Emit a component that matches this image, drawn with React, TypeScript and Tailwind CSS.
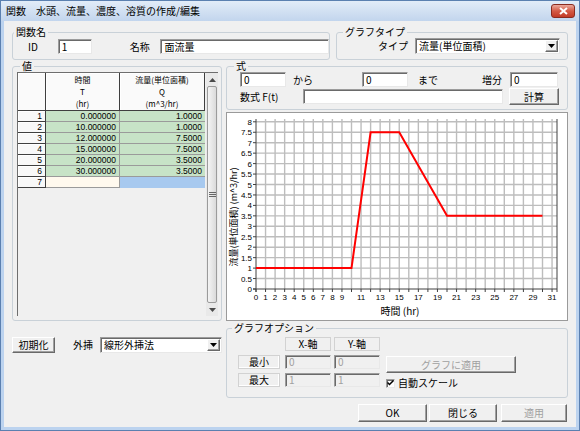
import React from 'react';

const sunken =
  'border border-t-[#9c9c9c] border-l-[#9c9c9c] border-r-[#e8e8e8] border-b-[#e8e8e8] shadow-[inset_1px_1px_0_#6a6a6a]';
const raised =
  'border border-t-white border-l-white border-r-[#696969] border-b-[#696969] shadow-[inset_-1px_-1px_0_#a0a0a0]';

function Btn({ children, className = '', disabled = false }: { children: React.ReactNode; className?: string; disabled?: boolean }) {
  return (
    <div className={`flex items-center justify-center bg-[#f0f0f0] ${raised} ${disabled ? 'text-[#a0a0a0]' : 'text-black'} ${className}`}>
      {children}
    </div>
  );
}

function Field({ value = '', className = '', disabled = false }: { value?: string; className?: string; disabled?: boolean }) {
  return (
    <div className={`flex items-center pl-[3px] ${sunken} ${disabled ? 'bg-[#f0f0f0] text-[#a0a0a0]' : 'bg-white'} ${className}`}>
      {value}
    </div>
  );
}

function Combo({ value, className = '' }: { value: string; className?: string }) {
  return (
    <div className={`flex items-stretch bg-white ${sunken} ${className}`}>
      <span className="flex-1 flex items-center pl-[3px]">{value}</span>
      <div className={`w-[13px] m-[1px] flex items-center justify-center bg-[#f0f0f0] ${raised}`}>
        <svg width="7" height="4" viewBox="0 0 7 4">
          <path d="M0 0h7L3.5 4z" fill="#000" />
        </svg>
      </div>
    </div>
  );
}

function Group({ title, legendOffset, className = '', children }: { title: string; legendOffset: string; className?: string; children: React.ReactNode }) {
  return (
    <fieldset className={`border border-[#c9d1d8] rounded-[3px] min-w-0 ${className}`}>
      <legend className={`${legendOffset} px-[2px] leading-[12px]`}>{title}</legend>
      {children}
    </fieldset>
  );
}

const rows = [
  ['0.000000', '1.0000'],
  ['10.000000', '1.0000'],
  ['12.000000', '7.5000'],
  ['15.000000', '7.5000'],
  ['20.000000', '3.5000'],
  ['30.000000', '3.5000'],
];

const num = "font-['Liberation_Sans',sans-serif] text-[8.5px]";

function HeadCell({ w, lines }: { w: string; lines: string[] }) {
  return (
    <div className={`${w} h-full flex flex-col items-center justify-center bg-[#fafafa] border-r border-b border-[#3f3f3f] shadow-[inset_1px_1px_0_#fff] text-[8px] leading-[12px]`}>
      {lines.map((l) => (
        <span key={l}>{l}</span>
      ))}
    </div>
  );
}

function DataGrid() {
  return (
    <div className="ml-[4px] w-[201px] h-[244px] flex border-l border-t border-[#6e6e6e] bg-[#f0f0f0]">
      <div className="w-[187px] flex flex-col">
        <div className="flex h-[38px]">
          <HeadCell w="w-[28px]" lines={[]} />
          <HeadCell w="w-[74px]" lines={['時間', 'T', '(hr)']} />
          <HeadCell w="w-[85px]" lines={['流量(単位面積)', 'Q', '(m^3/hr)']} />
        </div>
        {[...rows, ['', '']].map((r, i) => (
          <div key={i} className="flex h-[11px]">
            <div className={`w-[28px] flex items-center justify-end pr-[3px] bg-[#f8f8f8] border-r border-b border-[#3f3f3f] shadow-[inset_1px_1px_0_#fff] ${num}`}>
              {i + 1}
            </div>
            <div className={`w-[74px] flex items-center justify-end pr-[3px] border-r border-b border-[#9a9a9a] ${i === 6 ? 'bg-[#fff9ee]' : 'bg-[#c7e3c7]'} ${num}`}>
              {r[0]}
            </div>
            <div className={`w-[85px] flex items-center justify-end pr-[3px] border-b ${i === 6 ? 'bg-[#a7c9ef] border-[#a7c9ef]' : 'bg-[#c7e3c7] border-[#9a9a9a]'} ${num}`}>
              {r[1]}
            </div>
          </div>
        ))}
      </div>
      <div className="w-[13px] ml-[1px] flex flex-col bg-[#e9e9e9]">
        <div className="h-[13px] flex items-center justify-center">
          <svg width="7" height="4" viewBox="0 0 7 4">
            <path d="M0 4h7L3.5 0z" fill="#4a4a4a" />
          </svg>
        </div>
        <div className="flex-1 mx-[1px] flex items-center justify-center rounded-[2px] border border-[#9b9b9b] bg-[linear-gradient(90deg,#f4f4f4,#dadada)]">
          <svg width="7" height="6" viewBox="0 0 7 6">
            <path d="M0 0.5h7M0 2.5h7M0 4.5h7" stroke="#666" strokeWidth="1" />
          </svg>
        </div>
        <div className="h-[13px] flex items-center justify-center">
          <svg width="7" height="4" viewBox="0 0 7 4">
            <path d="M0 0h7L3.5 4z" fill="#4a4a4a" />
          </svg>
        </div>
      </div>
    </div>
  );
}

const X = (t: number) => 29 + t * 9.55;
const Y = (v: number) => 176 - v * 20.9;

function Chart() {
  const vs = Array.from({ length: 17 }, (_, i) => i * 0.5);
  const ts = Array.from({ length: 32 }, (_, i) => i);
  const xLabels = [0, 1, 2, 3, 4, 5, 6, 7, 8, 9, 11, 13, 15, 17, 19, 21, 23, 25, 27, 29, 31];
  const data: [number, number][] = [
    [0, 1],
    [10, 1],
    [12, 7.5],
    [15, 7.5],
    [20, 3.5],
    [30, 3.5],
  ];
  return (
    <div className="mt-[2px] h-[209px] w-[342px] bg-white border border-[#9a9a9a]">
      <svg width="340" height="207" viewBox="0 0 340 207" className="block">
        {ts.slice(1).map((t) => (
          <line key={`v${t}`} x1={X(t)} x2={X(t)} y1={6} y2={176} stroke="#bdbdbd" strokeWidth="1.4" />
        ))}
        {vs.slice(1).map((v) => (
          <line key={`h${v}`} x1={X(0)} x2={330} y1={Y(v)} y2={Y(v)} stroke="#bdbdbd" strokeWidth="1.4" />
        ))}
        <line x1={X(0)} x2={X(0)} y1={6} y2={179} stroke="#404040" strokeWidth="1" />
        <line x1={330} x2={330} y1={6} y2={179} stroke="#404040" strokeWidth="1" />
        <line x1={X(0) - 3} x2={330} y1={Y(0)} y2={Y(0)} stroke="#404040" strokeWidth="1" />
        {ts.map((t) => (
          <line key={`xt${t}`} x1={X(t)} x2={X(t)} y1={Y(0)} y2={Y(0) + 3} stroke="#404040" strokeWidth="1" />
        ))}
        {vs.map((v) => (
          <line key={`yt${v}`} x1={X(0) - 3} x2={X(0)} y1={Y(v)} y2={Y(v)} stroke="#404040" strokeWidth="1" />
        ))}
        <g fontFamily="'Liberation Sans', sans-serif" fontSize="8" fill="#000">
          {vs.map((v) => (
            <text key={`yl${v}`} x={25} y={Y(v) + 3} textAnchor="end">
              {Number.isInteger(v) ? String(v) : v.toFixed(1)}
            </text>
          ))}
          {xLabels.map((t) => (
            <text key={`xl${t}`} x={X(t)} y={187} textAnchor="middle">
              {t}
            </text>
          ))}
        </g>
        <polyline
          points={data.map(([t, v]) => `${X(t)},${Y(v)}`).join(' ')}
          fill="none"
          stroke="#ff0000"
          strokeWidth="2"
        />
        <g fontFamily="'Noto Sans CJK JP', sans-serif" fill="#000">
          <text x={173} y={202} fontSize="10" textAnchor="middle">
            時間 (hr)
          </text>
          <text x={0} y={0} fontSize="9" textAnchor="middle" transform="translate(10 104) rotate(-90)">
            流量(単位面積) (m^3/hr)
          </text>
        </g>
      </svg>
    </div>
  );
}

export default function App() {
  return (
    <div className="w-[580px] h-[431px] flex flex-col overflow-hidden bg-[#bcd3ef] border border-[#5b80b0] font-['Noto_Sans_CJK_JP','Noto_Sans',sans-serif] text-[10px] leading-none text-black">
      {/* title bar */}
      <div className="h-[20px] flex items-center pl-[5px] pr-[4px] bg-[linear-gradient(#e2ecf8,#c2d5ed)]">
        <span className="flex-1 text-[10px]">関数　水頭、流量、濃度、溶質の作成/編集</span>
        <div className="w-[24px] h-[14px] flex items-center justify-center rounded-[3px] border border-[#8a2b1f] bg-[linear-gradient(#eba99c,#d45a45_50%,#c23a26)]">
          <svg width="9" height="8" viewBox="0 0 9 8">
            <path d="M1 1l7 6M8 1L1 7" stroke="#fff" strokeWidth="2" />
          </svg>
        </div>
      </div>

      <div className="flex-1 mx-[3px] mb-[3px] px-[8px] flex flex-col bg-[#f0f0f0]">
        {/* row A */}
        <div className="mt-[5px] flex gap-[6px]">
          <Group title="関数名" legendOffset="ml-[1px]" className="w-[318px] h-[34px]">
            <div className="mt-[1px] h-[15px] flex items-center">
              <span className="ml-[15px] w-[31px]">ID</span>
              <Field value="1" className="w-[35px] h-[15px]" />
              <span className="ml-[38px] w-[32px]">名称</span>
              <Field value="面流量" className="w-[175px] h-[15px]" />
            </div>
          </Group>
          <Group title="グラフタイプ" legendOffset="ml-[6px]" className="w-[232px] h-[34px]">
            <div className="h-[16px] flex items-center">
              <span className="ml-[41px] w-[37px]">タイプ</span>
              <Combo value="流量(単位面積)" className="w-[145px] h-[16px]" />
            </div>
          </Group>
        </div>

        {/* row B */}
        <div className="flex gap-[4px]">
          <Group title="値" legendOffset="ml-[7px]" className="w-[210px] h-[261px]">
            <DataGrid />
          </Group>
          <div className="w-[342px] flex flex-col">
            <Group title="式" legendOffset="ml-[7px]" className="h-[50px]">
              <div className="h-[15px] flex items-center">
                <Field value="0" className="ml-[13px] w-[46px] h-[15px]" />
                <span className="w-[76px] pl-[7px]">から</span>
                <Field value="0" className="w-[46px] h-[15px]" />
                <span className="w-[74px] pl-[10px]">まで</span>
                <span className="w-[28px]">増分</span>
                <Field value="0" className="w-[48px] h-[15px]" />
              </div>
              <div className="mt-[1px] h-[17px] flex items-center">
                <span className="ml-[13px] w-[63px]">数式 F(t)</span>
                <Field className="w-[200px] h-[15px]" />
                <Btn className="ml-[6px] w-[50px] h-[17px]">計算</Btn>
              </div>
            </Group>
            <Chart />
          </div>
        </div>

        {/* row C */}
        <div className="mt-[1px] flex gap-[4px]">
          <div className="w-[210px] flex items-start">
            <div className="mt-[15px] flex items-center">
              <Btn className="w-[43px] h-[16px]">初期化</Btn>
              <span className="ml-[18px] w-[27px]">外挿</span>
              <Combo value="線形外挿法" className="w-[122px] h-[16px]" />
            </div>
          </div>
          <Group title="グラフオプション" legendOffset="ml-[5px]" className="w-[342px] h-[76px]">
            <div className="mt-[3px] flex">
              <div className="ml-[11px] w-[42px] flex flex-col gap-[4px]">
                <div className="h-[14px]" />
                <div className="h-[14px] flex items-center justify-center border border-[#d2d2d2] shadow-[inset_-1px_-1px_0_#fff]">最小</div>
                <div className="h-[14px] flex items-center justify-center border border-[#d2d2d2] shadow-[inset_-1px_-1px_0_#fff]">最大</div>
              </div>
              <div className="ml-[5px] w-[46px] flex flex-col gap-[4px]">
                <div className="h-[14px] flex items-center justify-center border border-[#d2d2d2]">X-軸</div>
                <Field value="0" disabled className="h-[14px]" />
                <Field value="1" disabled className="h-[14px]" />
              </div>
              <div className="ml-[3px] w-[46px] flex flex-col gap-[4px]">
                <div className="h-[14px] flex items-center justify-center border border-[#d2d2d2]">Y-軸</div>
                <Field value="0" disabled className="h-[14px]" />
                <Field value="1" disabled className="h-[14px]" />
              </div>
              <div className="ml-[6px] flex flex-col">
                <Btn disabled className="mt-[19px] w-[130px] h-[17px]">
                  グラフに適用
                </Btn>
                <div className="mt-[5px] flex items-center">
                  <div className={`w-[9px] h-[9px] bg-white flex items-center justify-center ${sunken}`}>
                    <svg width="7" height="6" viewBox="0 0 7 6">
                      <path d="M0.5 2.5l2 2 4-4" fill="none" stroke="#000" strokeWidth="1.5" />
                    </svg>
                  </div>
                  <span className="ml-[3px]">自動スケール</span>
                </div>
              </div>
            </div>
          </Group>
        </div>

        {/* row D */}
        <div className="mt-[6px] mr-[1px] flex justify-end">
          <Btn className="w-[69px] h-[18px]">OK</Btn>
          <Btn className="ml-[2px] w-[68px] h-[18px]">閉じる</Btn>
          <Btn disabled className="ml-[4px] w-[66px] h-[18px]">
            適用
          </Btn>
        </div>
      </div>
    </div>
  );
}
